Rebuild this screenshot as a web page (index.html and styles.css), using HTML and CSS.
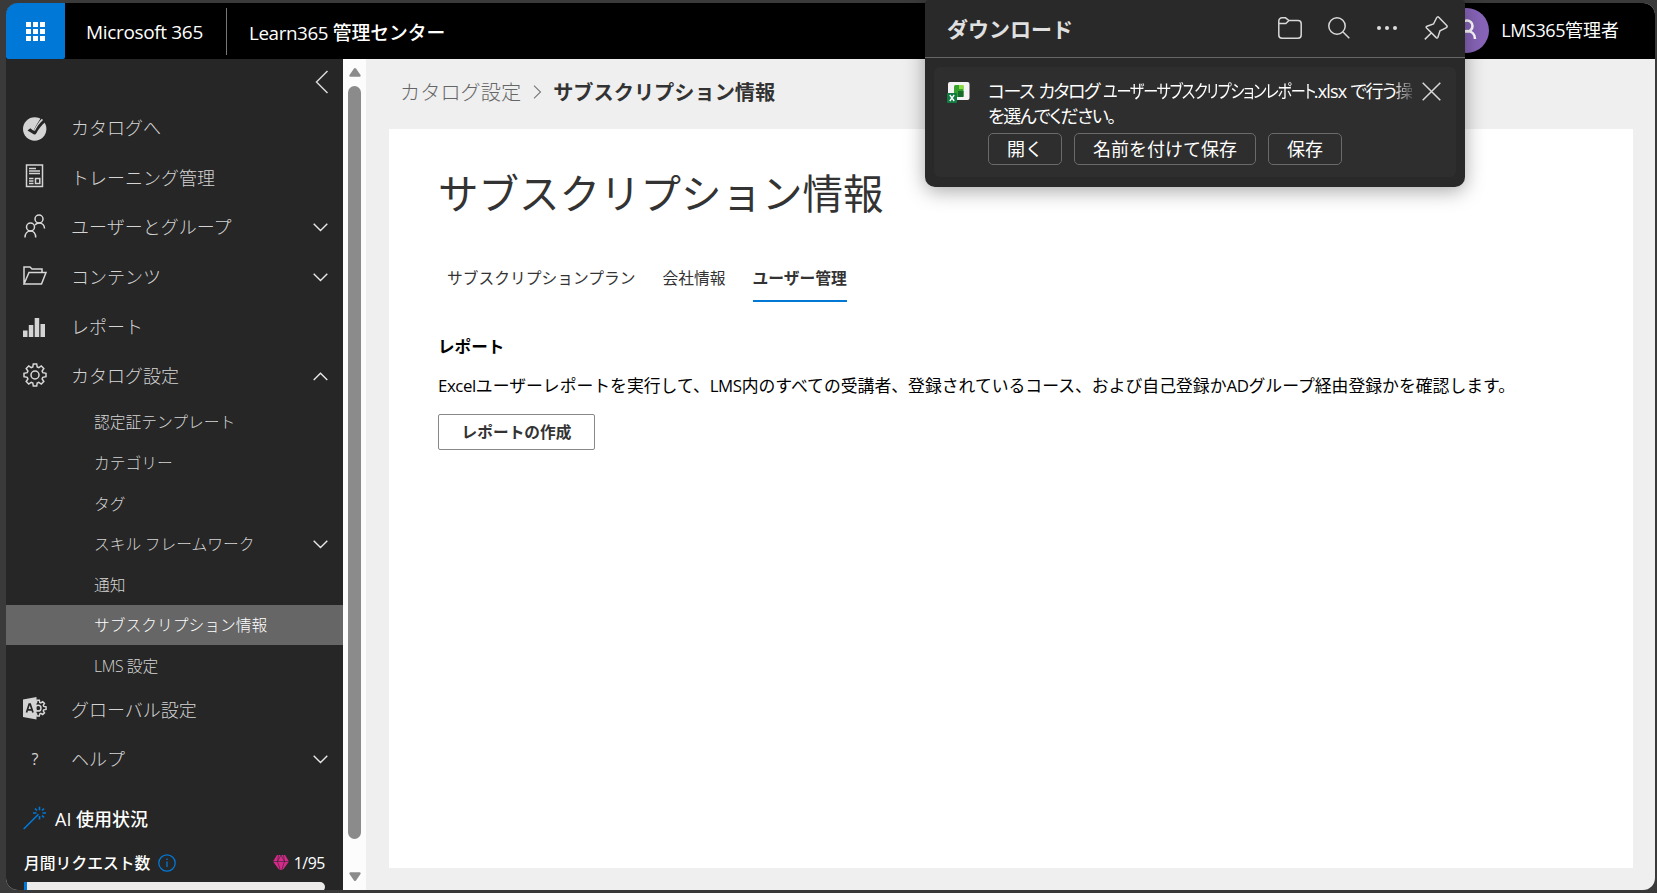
FILE: index.html
```html
<!DOCTYPE html>
<html lang="ja">
<head>
    <meta charset="UTF-8">
    <meta name="viewport" content="width=device-width, initial-scale=1.0">
    <title>サブスクリプション情報</title>
    <link rel="stylesheet" href="styles.css">
</head>
<body>

<div class="window">
    <header class="topbar">
        <div class="waffle">
            <svg width="19" height="19" viewBox="0 0 19 19" fill="#fff"><path d="M0 0h5v5H0zM7 0h5v5H7zM14 0h5v5h-5zM0 7h5v5H0zM7 7h5v5H7zM14 7h5v5h-5zM0 14h5v5H0zM7 14h5v5H7zM14 14h5v5h-5z"/></svg>
        </div>
        <div class="brand">Microsoft 365</div>
        <div class="divider"></div>
        <div class="app-name"><span class="latin">Learn365 </span>管理センター</div>
        <div class="account">
            <div class="avatar">
                <svg width="45" height="45" viewBox="0 0 45 45" fill="none" stroke="#fff" stroke-width="2.6"><circle cx="23" cy="18" r="5.5"/><path d="M15 31c0-5 3.500-8 8-8s8 3 8 8"/></svg>
            </div>
            <span class="account-name"><span class="latin">LMS365</span>管理者</span>
        </div>
    </header>

    <div class="body">
        <nav class="sidebar">
            <div class="collapse">
                <svg width="14" height="24" viewBox="0 0 14 24" class="line"><path d="M12.500 1L1.500 12l11 11"/></svg>
            </div>
            <div class="item">
                <svg class="icon" viewBox="0 0 24 24"><circle cx="11.700" cy="13" r="11.700" fill="#d4d4d4"/><path d="M4.500 14.500l2.800-2.300 3.200 2.600C12.500 10.500 15 6 18.500 1l4.500 4.500c-4.500 3.500-7.500 7.500-9.800 12-.6 1.100-1.900 1.300-2.900.4z" fill="#262626"/><path d="M10.800 14.600C13 10 16 5.500 18.800 2.800l1.200 1.200c-3.400 3-6.200 7-8 10.800z" fill="#d4d4d4"/></svg>
                <span class="label">カタログへ</span>
            </div>
            <div class="item">
                <svg class="icon up" viewBox="0 0 24 24"><path d="M3.500 1h16v21.500h-16z" fill="none" stroke="#d4d4d4" stroke-width="1.500"/><path d="M6 4.500h7M6 7h11M6 9.500h11M6 14.500h4.500M6 17h4.500M6 19.500h4.500M12.500 14.500h4.300v5h-4.300z" fill="none" stroke="#d4d4d4" stroke-width="1.500"/></svg>
                <span class="label">トレーニング管理</span>
            </div>
            <div class="item">
                <svg class="icon line up" viewBox="0 0 24 24"><circle cx="16" cy="5" r="4"/><circle cx="7.500" cy="13" r="4"/><path d="M2 23.500c0-4 2.500-6.500 5.500-6.500s5.200 2.500 5.200 6.500M12 11c1-1.300 2.500-2 4-2 3.200 0 5.500 2.300 5.500 5.500"/></svg>
                <span class="label">ユーザーとグループ</span>
                <svg class="chevron" viewBox="0 0 15 9"><path d="M.7.8l6.800 6.800L14.300.8"/></svg>
            </div>
            <div class="item">
                <svg class="icon line up" viewBox="0 0 24 24"><path d="M1 20V3h6l2 2h10v3.500M1 20L6 8.500h17L18.500 20z"/></svg>
                <span class="label">コンテンツ</span>
                <svg class="chevron" viewBox="0 0 15 9"><path d="M.7.8l6.800 6.800L14.300.8"/></svg>
            </div>
            <div class="item">
                <svg class="icon down" viewBox="0 0 24 24" fill="#d4d4d4"><path d="M0 14.500h4.500V21H0zM5.800 9h4.500v12H5.800zM11.700 2h4.500v19h-4.500zM17.500 8H22v13h-4.500z"/></svg>
                <span class="label">レポート</span>
            </div>
            <div class="item">
                <svg class="icon line up" viewBox="0 0 24 24"><use href="#gear"/></svg>
                <span class="label">カタログ設定</span>
                <svg class="chevron" viewBox="0 0 15 9"><path d="M.7 8l6.800-6.800L14.300 8"/></svg>
            </div>

            <div class="sub-list">
                <div class="sub">認定証テンプレート</div>
                <div class="sub">カテゴリー</div>
                <div class="sub">タグ</div>
                <div class="sub"><span>スキル フレームワーク</span>
                    <svg class="chevron" viewBox="0 0 15 9"><path d="M.7.8l6.800 6.800L14.300.8"/></svg>
                </div>
                <div class="sub">通知</div>
                <div class="sub active">サブスクリプション情報</div>
                <div class="sub"><span><span class="latin">LMS </span>設定</span></div>
            </div>

            <div class="item">
                <svg class="icon" viewBox="0 0 24 24"><g class="line" transform="translate(6.500 2.500) scale(.72)"><use href="#gear" stroke-width="2"/></g><path d="M0 2.500L13.500 0v22.500L0 20z" fill="#d4d4d4"/><path d="M3.500 15.500L6.200 7h1l2.800 8.500M4.500 12.800H9" fill="none" stroke="#262626" stroke-width="1.700"/></svg>
                <span class="label">グローバル設定</span>
            </div>
            <div class="item">
                <span class="icon question">?</span>
                <span class="label">ヘルプ</span>
                <svg class="chevron" viewBox="0 0 15 9"><path d="M.7.8l6.800 6.800L14.300.8"/></svg>
            </div>

            <div class="ai-title">
                <svg width="24" height="24" viewBox="0 0 24 24" fill="none" stroke="#0078d7" stroke-width="1.600"><path d="M.7 23L15.500 8.200M16.500.8v3.500M16.500 10v3.500M10 7h3.500M19.500 7H23M12 2.500L14 4.500M21 2.500L19 4.500M21 11.500L19 9.500"/></svg>
                <span><span class="latin">AI </span>使用状況</span>
            </div>
            <div class="requests">
                <span>月間リクエスト数</span>
                <svg width="18" height="18" viewBox="0 0 18 18" fill="none" stroke="#0078d7" stroke-width="1.300"><circle cx="9" cy="9" r="8.200"/><path d="M9 7.500v5.500M9 4.500v1.600"/></svg>
                <svg class="gem" width="16" height="15" viewBox="0 0 16 15"><path d="M4 0h8l4 6.500L10.500 14 8 15l-2.500-1L0 6.500z" fill="#d62a8a"/><path d="M0 6.500h16M5.500 0L4.500 6.500 7 14M10.500 0l1 6.500L9 14M4.500 6.500L8 0l3.500 6.500" fill="none" stroke="#262626" stroke-width=".6"/></svg>
                <span class="latin count">1/95</span>
            </div>
            <div class="progress"><div class="progress-fill"></div></div>
        </nav>

        <div class="scrollbar">
            <svg width="12" height="9" viewBox="0 0 12 9" fill="#8b8b8b"><path d="M5 .6Q6-.4 7 .6l4.500 6.400Q12 8.500 10.500 8.700h-9Q0 8.500.5 7z"/></svg>
            <div class="thumb"></div>
            <svg width="12" height="9" viewBox="0 0 12 9" fill="#8b8b8b"><path d="M5 8.400Q6 9.400 7 8.400L11.500 2Q12 .5 10.500.3h-9Q0 .5.5 2z"/></svg>
        </div>

        <main class="main">
            <div class="breadcrumb">
                <span>カタログ設定</span>
                <svg width="9" height="14" viewBox="0 0 9 14" fill="none" stroke="#777" stroke-width="1.100"><path d="M1 .7L7.500 7 1 13.300"/></svg>
                <b>サブスクリプション情報</b>
            </div>
            <section class="card">
                <h1>サブスクリプション情報</h1>
                <div class="tabs">
                    <div class="tab">サブスクリプションプラン</div>
                    <div class="tab">会社情報</div>
                    <div class="tab selected">ユーザー管理</div>
                </div>
                <h2>レポート</h2>
                <p class="description"><span class="latin">Excel</span>ユーザーレポートを実行して、<span class="latin">LMS</span>内のすべての受講者、登録されているコース、および自己登録か<span class="latin">AD</span>グループ経由登録かを確認します。</p>
                <button class="report-button">レポートの作成</button>
            </section>
        </main>
    </div>
</div>

<div class="downloads">
    <div class="downloads-head">
        <span class="downloads-title">ダウンロード</span>
        <svg width="24" height="22" viewBox="0 0 24 22" class="line"><path d="M.8 7V4A3.200 3.200 0 0 1 4 .8h3.500L11 3.500h9A3.200 3.200 0 0 1 23.200 6.700V18a3.200 3.200 0 0 1-3.200 3.200H4A3.200 3.200 0 0 1 .8 18V6.500h7L11 3.500"/></svg>
        <svg width="22" height="22" viewBox="0 0 22 22" class="line"><circle cx="9" cy="9" r="8.200"/><path d="M15 15l6.300 6.300"/></svg>
        <svg width="22" height="6" viewBox="0 0 22 6" fill="#ddd"><circle cx="3" cy="3" r="2"/><circle cx="11" cy="3" r="2"/><circle cx="19" cy="3" r="2"/></svg>
        <svg width="24" height="24" viewBox="0 0 24 24" class="line"><path d="M15 1.500q-1.500-1.500-2.500.5L9.500 8 3 10.200q-1.500.6-.4 1.800l9.600 9.600q1.200 1 1.700-.4L16 14.800l6-3q2-1 .5-2.500zM7 17.200L.8 23.400"/></svg>
    </div>
    <div class="download-item">
        <svg width="23" height="21" viewBox="0 0 23 21"><rect x="1" width="21.500" height="18" rx="2" fill="#f4f4f4"/><rect x="7" y="3" width="9.500" height="12" rx="1.500" fill="#35a12f"/><path d="M12 3h4.500v4H12z" fill="#8cdb3f"/><path d="M11 9h5.500v6H11z" fill="#176b2c"/><rect y="11" width="10" height="10" rx="1" fill="#107c41"/><path d="M2.800 13l4.400 6M7.200 13l-4.400 6" stroke="#fff" stroke-width="1.400"/></svg>
        <div class="download-info">
            <div class="download-text">
                <div class="file-line">コース カタログ <span class="condensed">ユーザーサブスクリプションレポート</span><span class="latin">.xlsx </span>で行う<span class="fade">操</span></div>
                <div class="file-line">を選んでください。</div>
            </div>
            <div class="download-buttons">
                <button>開く</button>
                <button class="wide">名前を付けて保存</button>
                <button>保存</button>
            </div>
        </div>
        <svg class="close line" width="19" height="19" viewBox="0 0 19 19"><path d="M.7.7l17.600 17.600M18.300.7L.7 18.300"/></svg>
    </div>
</div>

<svg width="0" height="0" class="defs">
    <defs>
        <g id="gear"><circle cx="12" cy="12" r="4"/><path d="M10.300 1h3.400l.5 3 1.600.7L18.300 3l2.500 2.500-1.700 2.500.7 1.700 3.200.6v3.400l-3.200.6-.7 1.700 1.700 2.500-2.500 2.500-2.500-1.700-1.600.7-.5 3h-3.400l-.5-3-1.600-.7L5.700 21l-2.500-2.500L4.900 16l-.7-1.700-3.200-.6v-3.400l3.200-.6L4.900 8 3.200 5.500 5.700 3l2.500 1.700L9.800 4z"/></g>
    </defs>
</svg>

</body>
</html>
```

FILE: styles.css
```css
body {
    margin: 0;
    padding: 3px 2px 3px 6px;
    width: 1649px;
    height: 887px;
    overflow: hidden;
    background-color: #3a3a3a;
    font-family: "Noto Sans CJK JP", sans-serif;
    color: #333;
}
button {
    font-family: inherit;
    padding: 0;
}
.latin {
    font-family: "Open Sans", "Noto Sans CJK JP", sans-serif;
    letter-spacing: -0.025em;
}
.line {
    fill: none;
    stroke: #d8d8d8;
    stroke-width: 1.5;
}
.defs {
    display: block;
}
.window {
    height: 887px;
    border-radius: 12px;
    overflow: hidden;
    background-color: #efefef;
}

/* top bar */
.topbar {
    display: flex;
    align-items: center;
    height: 56px;
    background-color: #000;
    color: #fff;
    font-size: 18.8px;
    white-space: nowrap;
}
.waffle {
    display: flex;
    align-items: center;
    justify-content: center;
    width: 59px;
    height: 56px;
    background-color: #0078d7;
    border-radius: 0 0 2px 2px;
}
.brand {
    width: 139px;
    margin-left: 21px;
    padding-top: 1px;
    font-family: "Open Sans", sans-serif;
    font-size: 19px;
    letter-spacing: -0.018em;
}
.divider {
    width: 1px;
    height: 47px;
    margin: 0 22px 0 1px;
    background-color: #777;
}
.app-name {
    font-weight: 500;
    padding-top: 1px;
}
.app-name .latin {
    font-weight: 400;
    letter-spacing: -0.02em;
}
.account {
    display: flex;
    align-items: center;
    margin: -2px 36px 0 auto;
    font-size: 18px;
    gap: 12px;
}
.account-name {
    margin-top: -2px;
}
.avatar {
    width: 45px;
    height: 45px;
    border-radius: 50%;
    background-color: #8764b8;
}

.body {
    display: flex;
    height: 831px;
}

/* sidebar */
.sidebar {
    width: 337px;
    flex-shrink: 0;
    background-color: #262626;
    color: #d4d4d4;
    overflow: hidden;
}
.collapse {
    display: flex;
    justify-content: flex-end;
    height: 33px;
    padding: 11px 14px 0 0;
}
.item {
    display: flex;
    align-items: center;
    height: 49.6px;
    padding: 0 15px 0 17px;
    font-size: 18px;
    font-weight: 300;
}
.icon {
    width: 24px;
    height: 24px;
    margin-right: 24px;
    flex-shrink: 0;
    overflow: visible;
}
.icon.up {
    margin-top: -2px;
}
.icon.down {
    margin-top: 4px;
}
.question {
    font-family: "Open Sans", sans-serif;
    font-size: 16px;
    line-height: 24px;
    text-align: center;
    font-weight: 400;
}
.label {
    flex: 1;
    margin-top: -1px;
}
.chevron {
    width: 15px;
    height: 9px;
    margin-left: auto;
    margin-top: 2px;
    fill: none;
    stroke: #e8e8e8;
    stroke-width: 1.4;
}
.sub-list {
    padding-top: 1px;
    margin-bottom: -1.2px;
}
.sub {
    display: flex;
    align-items: center;
    height: 40.6px;
    padding: 0 15px 0 88px;
    font-size: 15.75px;
    font-weight: 300;
}
.sub.active {
    background-color: #666;
    color: #fff;
}
.ai-title {
    display: flex;
    align-items: center;
    gap: 8px;
    height: 30px;
    margin: 19px 0 0 17px;
    color: #fff;
    font-size: 18px;
    font-weight: 500;
}
.ai-title .latin {
    letter-spacing: 0;
}
.requests {
    display: flex;
    align-items: center;
    height: 24px;
    margin: 18px 18px 0;
    color: #fff;
    font-size: 15.8px;
    font-weight: 500;
}
.requests svg {
    margin-left: 8px;
}
.requests .gem {
    margin-left: auto;
    margin-right: 5px;
}
.count {
    font-weight: 400;
}
.progress {
    height: 10px;
    margin: 7px 18px 0;
    border-radius: 0 5px 5px 0;
    background-color: #edebe9;
    overflow: hidden;
}
.progress-fill {
    width: 3px;
    height: 10px;
    background-color: #0078d7;
}
.scrollbar {
    display: flex;
    flex-direction: column;
    align-items: center;
    width: 23px;
    flex-shrink: 0;
    box-sizing: border-box;
    padding: 9px 0;
    background-color: #fcfcfc;
}
.thumb {
    flex: 1;
    width: 13px;
    margin: 9px 0 33px;
    border-radius: 7px;
    background-color: #8b8b8b;
}

/* content */
.main {
    flex: 1;
    padding: 0 22px 0 23px;
}
.breadcrumb {
    display: flex;
    align-items: center;
    height: 70px;
    padding: 0 0 5px 11px;
    box-sizing: border-box;
    font-size: 20.2px;
    color: #666;
    font-weight: 300;
}
.breadcrumb svg {
    margin: 0 11px 0 12px;
}
.breadcrumb b {
    color: #333;
    font-weight: 700;
}
.card {
    height: 739px;
    padding: 0 49px;
    box-sizing: border-box;
    background-color: #fff;
    overflow: hidden;
}
h1 {
    margin: 33px 0 0;
    font-size: 40.5px;
    line-height: 60px;
    font-weight: 400;
}
.tabs {
    display: flex;
    gap: 27px;
    margin: 38px 0 0 9px;
    font-size: 15.75px;
}
.tab {
    height: 40px;
    line-height: 36px;
    border-bottom: 2px solid transparent;
}
.tab.selected {
    font-weight: 700;
    border-bottom-color: #0078d4;
}
h2 {
    margin: 32px 0 0;
    font-size: 16.6px;
    line-height: 24px;
    color: #000;
}
.description {
    margin: 15px 0 16px;
    font-size: 16.83px;
    line-height: 24px;
    color: #000;
    white-space: nowrap;
}
.report-button {
    display: block;
    width: 157px;
    height: 36px;
    padding-bottom: 2px;
    border: 1px solid #8a8886;
    border-radius: 2px;
    background-color: #fff;
    color: #333;
    font-size: 15.7px;
    font-weight: 700;
}

/* downloads flyout, floats over the page */
.downloads {
    position: absolute;
    top: 0;
    left: 925px;
    width: 540px;
    height: 187px;
    border-radius: 4px 4px 10px 10px;
    background-color: #292929;
    box-shadow: 0 4px 20px rgba(0, 0, 0, 0.35);
    color: #fff;
}
.downloads-head {
    display: flex;
    align-items: center;
    height: 58px;
    padding: 0 17px 1px 22px;
    box-sizing: border-box;
    border-bottom: 1px solid #666;
    gap: 26px;
}
.downloads-title {
    margin-right: auto;
    font-size: 21px;
    font-weight: 700;
    color: #e0e0e0;
}
.download-item {
    display: flex;
    align-items: flex-start;
    height: 110px;
    margin: 9px;
    padding: 15px 15px 0 13px;
    box-sizing: border-box;
    border-radius: 6px;
    background-color: #2e2e2e;
}
.download-info {
    width: 425px;
    margin: -4px 0 0 18px;
}
.file-line {
    font-size: 18px;
    line-height: 24px;
    white-space: nowrap;
    font-feature-settings: "palt";
    letter-spacing: -0.08em;
    word-spacing: 2px;
}
.file-line .latin {
    letter-spacing: -0.045em;
    word-spacing: 0;
}
/* long file name, squeezed to fit before the close button */
.condensed {
    display: inline-block;
    transform: scaleX(0.84);
    transform-origin: left;
    margin-right: -42px;
}
.fade {
    background: linear-gradient(to right, #ddd, #555);
    background-clip: text;
    -webkit-background-clip: text;
    color: transparent;
}
.download-buttons {
    display: flex;
    gap: 12px;
    margin-top: 6px;
}
.download-buttons button {
    width: 74px;
    height: 32px;
    padding-bottom: 2px;
    border: 1px solid #6a6a6a;
    border-radius: 5px;
    background-color: #2e2e2e;
    color: #fff;
    font-size: 18px;
}
.download-buttons .wide {
    width: 182px;
}
.close {
    margin-left: 9px;
}
```
